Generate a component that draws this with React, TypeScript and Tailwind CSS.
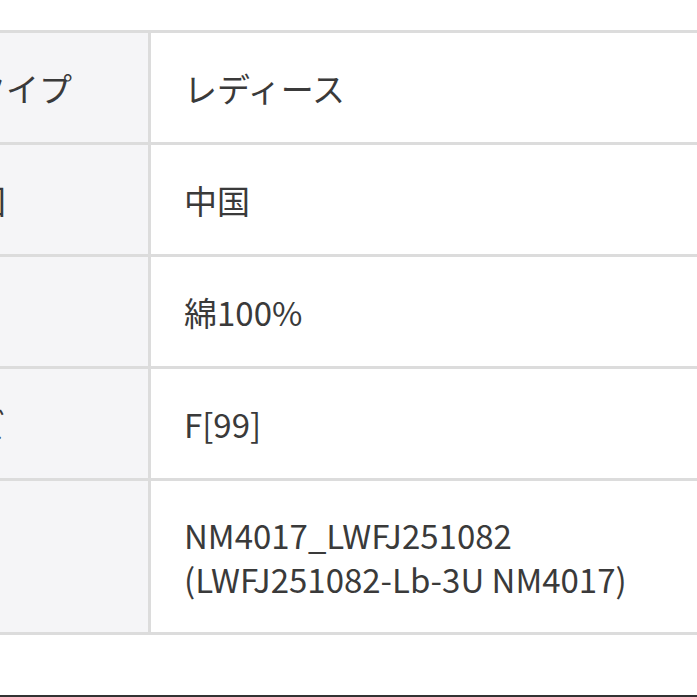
import React from 'react';

const rows: { label: string; value: string[] }[] = [
  { label: '性別タイプ', value: ['レディース'] },
  { label: '原産国', value: ['中国'] },
  { label: '素材', value: ['綿100%'] },
  { label: 'サイズ', value: ['F[99]'] },
  { label: '品番', value: ['NM4017_LWFJ251082', '(LWFJ251082-Lb-3U NM4017)'] },
];

export default function App() {
  return (
    <div
      className="w-[697px] h-[697px] overflow-hidden bg-white flex flex-col text-[#3a3a3a]"
      style={{ fontFamily: '"Noto Sans CJK JP", "Noto Sans", sans-serif' }}
    >
      <div className="h-[30px] shrink-0" />
      {/* 仕様テーブル（左列は画面外にはみ出している） */}
      <div className="ml-[-113px] w-[900px] border-t-[3px] border-[#dcdcdc] shrink-0">
        {rows.map((row) => {
          const multi = row.value.length > 1;
          return (
            <div key={row.label} className="grid grid-cols-[264px_1fr] border-b-[3px] border-[#dcdcdc]">
              <div className="bg-[#f5f5f7] border-r-[3px] border-[#dcdcdc] pl-[20px] text-[33px] leading-[44px] whitespace-nowrap flex items-center">
                {row.label}
              </div>
              <div
                className={
                  multi
                    ? 'pl-[33px] pt-[32px] pb-[31px] text-[33px] leading-[44px] whitespace-nowrap'
                    : 'pl-[33px] pt-[33px] pb-[32px] text-[33px] leading-[44px] whitespace-nowrap'
                }
              >
                {row.value.map((v) => (
                  <div key={v}>{v}</div>
                ))}
              </div>
            </div>
          );
        })}
      </div>
      <div className="mt-auto h-[2px] bg-[#333333] shrink-0" />
    </div>
  );
}
